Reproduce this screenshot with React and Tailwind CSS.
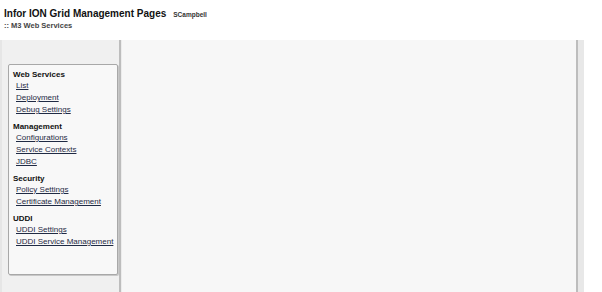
import React from 'react';

const sections = [
  { title: 'Web Services', links: ['List', 'Deployment', 'Debug Settings'] },
  { title: 'Management', links: ['Configurations', 'Service Contexts', 'JDBC'] },
  { title: 'Security', links: ['Policy Settings', 'Certificate Management'] },
  { title: 'UDDI', links: ['UDDI Settings', 'UDDI Service Management'] },
];

const App = () => {
  return (
    <div className="h-[292px] w-[602px] overflow-hidden bg-white font-['Liberation_Sans',Arial,sans-serif] text-[#222]">
      <div className="h-10 pl-1 pt-[7px]">
        <div className="flex items-baseline">
          <span className="text-[10px] font-bold leading-[13px] text-[#111]">Infor ION Grid Management Pages</span>
          <span className="ml-[7px] text-[6.5px] font-bold text-[#333]">SCampbell</span>
        </div>
        <div className="text-[7.5px] font-bold leading-[11px] text-[#444]">:: M3 Web Services</div>
      </div>
      <div className="flex h-[252px]">
        <div className="w-[119px] border-l-2 border-[#e6e6e6] bg-[#f0f0f0] pl-[6px] pt-6">
          <div className="h-[211px] w-[110px] rounded-[2px] border border-[#a8a8a8] bg-[#f8f8f8] pl-1 pt-[4px] shadow-[1px_1px_0_#c8c8c8]">
            {sections.map((s) => (
              <div key={s.title} className="mb-[5px]">
                <div className="text-[8px] font-bold leading-[11px] text-[#111]">{s.title}</div>
                {s.links.map((l) => (
                  <div key={l} className="pl-[3px] text-[8px] leading-[12px]">
                    <a href="#" className="text-[#1f2a44] underline">{l}</a>
                  </div>
                ))}
              </div>
            ))}
          </div>
        </div>
        <div className="w-[3px] border-l-2 border-[#bdbdbd] bg-[#ececec]" />
        <div className="w-[454px] bg-[#f7f7f7]" />
        <div className="w-[2px] bg-[#bdbdbd]" />
        <div className="w-[6px] bg-[#e8e8e8]" />
        <div className="flex-1 bg-white" />
      </div>
    </div>
  );
};

export default App;
